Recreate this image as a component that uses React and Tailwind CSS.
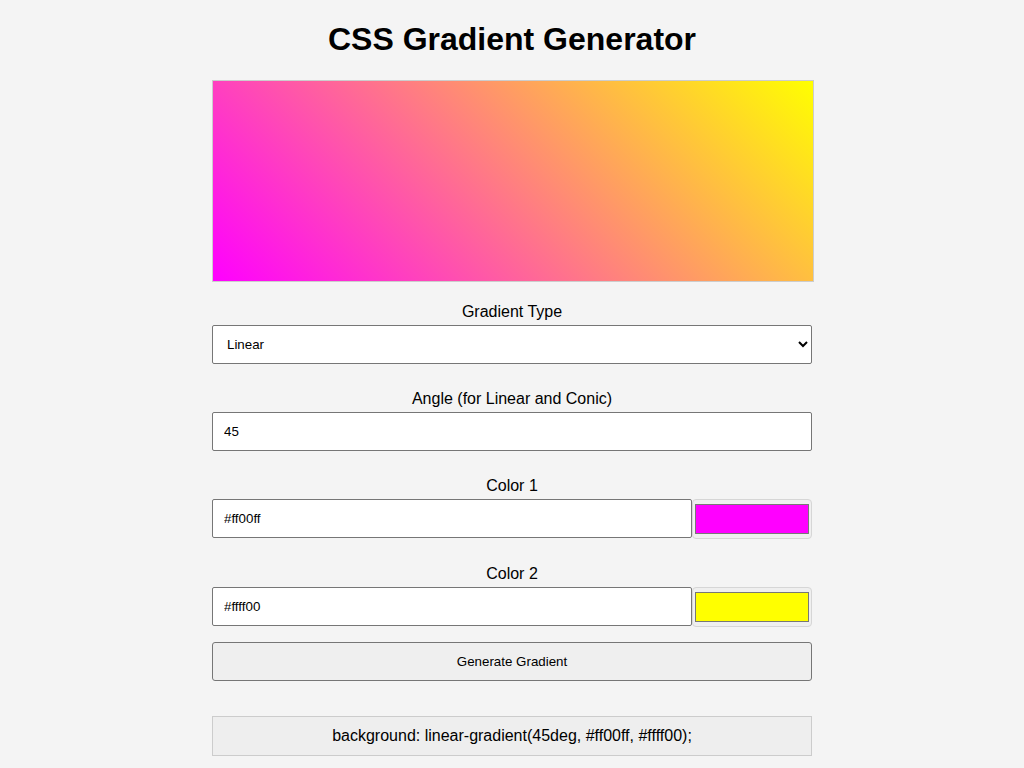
import React, { useState } from "react";

const field =
  "block w-full h-[39px] bg-white border border-[#767676] rounded-[2px] text-[13.33px] text-black outline-none";

const Label = ({ children }) => (
  <label className="block text-center text-[16px] leading-[18px] pt-[1px] mb-[4px]">
    {children}
  </label>
);

const ColorRow = ({ value, setValue }) => (
  <div className="flex">
    <input
      type="text"
      value={value}
      onChange={(e) => setValue(e.target.value)}
      className="block w-[480px] h-[39px] px-[11px] bg-white border border-[#767676] rounded-[2px] text-[13.33px] outline-none"
    />
    <div className="w-[120px] h-[40px] border border-[#d6d6d6] rounded-[4px] bg-[#efefef] p-[2px] pt-[4px]">
      <div
        className="w-full h-[30px] border border-[#777777]"
        style={{ background: value }}
      />
    </div>
  </div>
);

export default function App() {
  const [type, setType] = useState("linear");
  const [angle, setAngle] = useState("45");
  const [color1, setColor1] = useState("#ff00ff");
  const [color2, setColor2] = useState("#ffff00");

  const css =
    type === "radial"
      ? `radial-gradient(circle, ${color1}, ${color2})`
      : type === "conic"
      ? `conic-gradient(from ${angle}deg, ${color1}, ${color2})`
      : `linear-gradient(${angle}deg, ${color1}, ${color2})`;

  return (
    <div
      className="min-h-screen bg-[#f4f4f4] text-black pt-[21px]"
      style={{ fontFamily: '"Liberation Sans", Arial, sans-serif' }}
    >
      <h1 className="text-center text-[32px] font-bold leading-[37px] mb-[22px]">
        CSS Gradient Generator
      </h1>
      <div className="w-[600px] mx-auto">
        <div
          className="w-[602px] h-[202px] border border-[#cccccc]"
          style={{ background: css }}
        />

        <div className="mt-[20px]">
          <Label>Gradient Type</Label>
          <select
            value={type}
            onChange={(e) => setType(e.target.value)}
            className={field + " px-[10px] appearance-auto"}
          >
            <option value="linear">Linear</option>
            <option value="radial">Radial</option>
            <option value="conic">Conic</option>
          </select>
        </div>

        <div className="mt-[25px]">
          <Label>Angle (for Linear and Conic)</Label>
          <input
            type="text"
            value={angle}
            onChange={(e) => setAngle(e.target.value)}
            className={field + " px-[11px]"}
          />
        </div>

        <div className="mt-[25px]">
          <Label>Color 1</Label>
          <ColorRow value={color1} setValue={setColor1} />
        </div>

        <div className="mt-[25px]">
          <Label>Color 2</Label>
          <ColorRow value={color2} setValue={setColor2} />
        </div>

        <button className="block w-full h-[39px] mt-[15px] bg-[#efefef] border border-[#767676] rounded-[3px] text-[13.33px]">
          Generate Gradient
        </button>

        <div className="mt-[35px] h-[40px] flex items-center justify-center bg-[#eeeeee] border border-[#cccccc] text-[16px]">
          background: {css};
        </div>
      </div>
    </div>
  );
}
